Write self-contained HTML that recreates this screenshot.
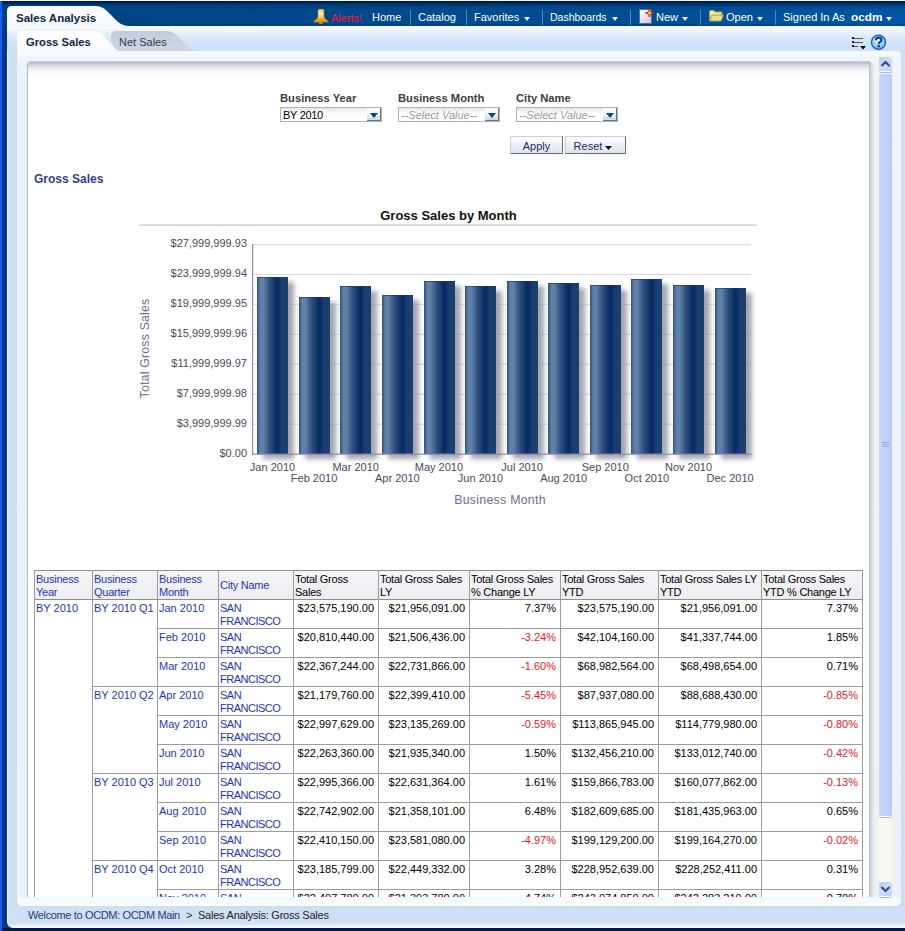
<!DOCTYPE html>
<html><head><meta charset="utf-8">
<style>
*{margin:0;padding:0;box-sizing:border-box}
html,body{width:905px;height:931px;overflow:hidden;background:#003a82;font-family:"Liberation Sans",sans-serif}
.a{position:absolute}
#frameL{left:0;top:0;width:2px;height:931px;background:#1b5cf0}
#topw{left:0;top:0;width:905px;height:1px;background:#f4f6fa}
#hdr{left:2px;top:1px;width:903px;height:25px;background:linear-gradient(#000a22 0px,#00204e 1px,#002858 2px,#00306a 3px,rgba(0,58,124,.85) 4px,rgba(0,58,118,.6) 5px,rgba(0,60,120,.3) 7px,rgba(0,60,120,0) 10px,rgba(0,60,120,0) 23px,rgba(0,50,130,.5) 24px),linear-gradient(90deg,#00427f,#00488a 35%,#004d92 65%,#0056a2)}
#outer{left:7px;top:26px;width:898px;height:902px;background:linear-gradient(90deg,#f6f9fe 0px,#f6f9fe 1px,#d6e5f6 1px,#cddef3 3px,#cddef3 100%);border-radius:0 0 0 6px}
#outerTop{left:7px;top:26px;width:898px;height:25px;border-radius:0 5px 0 0;background:linear-gradient(#ffffff 0px,#f2f7fd 3px,#e4eefa 8px,#d6e6f8 14px,#cfe2f6 20px,#cde0f5 25px)}
#bottomNavy{left:2px;top:928px;width:903px;height:3px;background:#001a40}
#inner{left:17px;top:51px;width:884px;height:855px;border-radius:4px 4px 5px 5px;background:linear-gradient(#f7fafd 0px,#f5f9fd 5px,#eef5fd 6px,#e9f2fc 100%);}
#innerL{left:17px;top:61px;width:10px;height:836px;background:linear-gradient(90deg,#f4f8fd 0px,#f4f8fd 1px,#e6f0fb 1px,#e9f2fc 10px)}
#innerBot{left:17px;top:897px;width:884px;height:9px;background:linear-gradient(#f4f8fd,#fafcfe);border-radius:0 0 5px 5px}
#page{left:27px;top:61px;width:842px;height:836px;background:#fff;border-left:1px solid #b4b8c4;border-radius:4px 6px 0 0;overflow:hidden}
#pageShadowTop{left:0;top:0;width:100%;height:15px;background:linear-gradient(#c8ccd8 0px,#bac0ce 1px,#c4c9d4 3px,#dcdee4 5px,#eeeff1 8px,#f8f8f8 11px,#fff 15px)}
#pageShadowR{left:855px;top:61px;width:20px;height:836px;border-radius:0 8px 0 0;background:linear-gradient(90deg,#b4b8c2 0px,#b4b8c2 14px,#d6d9e1 16px,#eef3fb 20px)}
#footer{left:9px;top:906px;width:896px;height:22px;border-radius:0 0 0 5px;background:linear-gradient(#c9ddf3 0px,#cde0f4 2px,#cde0f4 17px,#dde9f8 19px,#eef4fc 20px,#f8fbfe 22px)}
#footer span{position:absolute;top:2px;font-size:11px;line-height:14px;white-space:pre}
/* scrollbar */
#sbTrack{left:877px;top:56px;width:17px;height:841px;background:linear-gradient(90deg,#f0eee4,#faf9f4 2px,#f7f5ee 14px,#f0eee4);}
.sbBtn{width:13px;height:14px;border-radius:2px;background:linear-gradient(135deg,#b8cbf6,#cfddfb 50%,#b9cff7);box-shadow:0 1px 0 #fff,0 2px 0 #9fb6e6}
#sbUp{left:879px;top:57px}
#sbDown{left:879px;top:882px}
#sbThumb{left:879px;top:74px;width:13px;height:742px;border-radius:2px;background:linear-gradient(90deg,#c9d6f8,#c3d2f8 60%,#b4caf6);box-shadow:0 1px 0 #fff,0 2px 0 #9fb6e6}

.t{position:absolute;white-space:pre;line-height:13px}
.hn{font-size:11px;color:#fff;top:11px}
.sep{position:absolute;top:10px;width:1px;height:15px;background:#5f82b2}
.arr{position:absolute;top:17px;width:0;height:0;border-left:3.5px solid transparent;border-right:3.5px solid transparent;border-top:4px solid #eef2fa}
#tabSA{left:7px;top:6px;width:125px;height:21px}

#clip{left:0;top:0;width:869px;height:897px;overflow:hidden}
.plab{position:absolute;white-space:pre;font-size:11.2px;font-weight:bold;color:#3d3d3d;line-height:13px;top:92px}
.sel{position:absolute;top:107px;width:102px;height:15px;border:1px solid #b4b4ac;background:linear-gradient(#e2e6e8,#f8f9fa 4px,#fff 6px)}
.sel span{position:absolute;left:2px;top:1px;font-size:11px;line-height:13px;white-space:pre}
.sel .dd{position:absolute;right:0;top:0;width:14px;height:13px;background:linear-gradient(#fff,#eef3fa 50%,#c8d9ef);border-right:1px solid #6c7484;border-bottom:1px solid #6c7484}
.sel .dd:after{content:"";position:absolute;left:3px;top:5px;border-left:4px solid transparent;border-right:4px solid transparent;border-top:5px solid #0b4a6c}
.btn{position:absolute;height:18px;border:1px solid #c8ccd4;border-right-color:#6a6e78;border-bottom-color:#6a6e78;background:linear-gradient(#fbfcfe,#eef1f7 50%,#dde3ee);font-size:11px;line-height:18px;color:#1c2c5c;text-align:center;white-space:pre}
/*TABLECSS*/
.tl{height:1px;background:#9c9c9c}
.tv{width:1px;height:340px;background:#9c9c9c}
.th{font-size:11px;line-height:13px;color:#000;white-space:pre;letter-spacing:-0.25px}
.th.b,.td.b{color:#1f34bd}
.td{font-size:11px;line-height:13px;color:#000;white-space:pre}
.td.sf{letter-spacing:-0.5px}
.num{text-align:right}
.neg{color:#f0141e}
/*/TABLECSS*//*/TABLECSS*/</style></head>
<body>
<div class="a" id="frameL"></div>
<div class="a" id="topw"></div>
<div class="a" id="hdr"></div>
<div class="a" id="outer"></div>
<div class="a" id="outerTop"></div>
<div class="a" id="bottomNavy"></div>
<svg class="a" id="tabSA" viewBox="0 0 125 21"><defs><linearGradient id="gSA" x1="0" y1="0" x2="0" y2="1"><stop offset="0" stop-color="#ffffff"/><stop offset="1" stop-color="#f3f7fd"/></linearGradient></defs><path d="M0 21 V5 Q0 0 5 0 H88 Q95 0 100 5 L111 16 Q116 20 123 20 H125 V21 Z" fill="url(#gSA)"/></svg>
<span class="t" style="left:16px;top:12px;font-size:11.5px;font-weight:bold;color:#0d1f48">Sales Analysis</span>
<svg class="a" style="left:313px;top:9px" width="16" height="15" viewBox="0 0 16 15"><defs><radialGradient id="gB" cx="0.45" cy="0.35" r="0.6"><stop offset="0" stop-color="#fff8c8"/><stop offset="0.5" stop-color="#f0c850"/><stop offset="1" stop-color="#e49414"/></radialGradient></defs><path d="M5 1.5 Q5 0 6.5 0 H9.5 Q11 0 11 1.5 V7 Q11 10 15 12 V13 H1 V12 Q5 10 5 7 Z" fill="url(#gB)" stroke="#d88a10" stroke-width="0.6"/><ellipse cx="8" cy="14" rx="2" ry="1.2" fill="#c88a20"/></svg>
<span class="t hn" style="left:331px;top:11.5px;color:#ff1434">Alerts!</span>
<span class="t hn" style="left:372px">Home</span>
<div class="sep" style="left:410px"></div>
<span class="t hn" style="left:418px">Catalog</span>
<div class="sep" style="left:466px"></div>
<span class="t hn" style="left:474px">Favorites</span><div class="arr" style="left:524px"></div>
<div class="sep" style="left:542px"></div>
<span class="t hn" style="left:550px;font-size:10.5px">Dashboards</span><div class="arr" style="left:612px"></div>
<div class="sep" style="left:630px"></div>
<svg class="a" style="left:639px;top:8px" width="15" height="17" viewBox="0 0 15 17"><defs><linearGradient id="gN" x1="0" y1="0" x2="1" y2="1"><stop offset="0" stop-color="#ffffff"/><stop offset="1" stop-color="#c8c4e0"/></linearGradient></defs><rect x="0.5" y="1.5" width="12" height="14" fill="url(#gN)" stroke="#6a5a8a" stroke-width="0.8"/><path d="M10.5 1 L11.5 4 L14.5 5 L11.5 6 L10.5 9 L9.5 6 L6.5 5 L9.5 4 Z" fill="#ffe840" stroke="#b03010" stroke-width="1"/></svg>
<span class="t hn" style="left:656px">New</span><div class="arr" style="left:682px"></div>
<div class="sep" style="left:700px"></div>
<svg class="a" style="left:709px;top:10px" width="15" height="12" viewBox="0 0 15 12"><path d="M0.5 11 V1.5 Q0.5 0.5 1.5 0.5 H5 L6 2 H12 Q13 2 13 3 V4.5" fill="#eeeab0" stroke="#b89c30" stroke-width="1"/><path d="M0.5 11 L3 5 H14.5 L12 11 Z" fill="#e2de94" stroke="#b89c30" stroke-width="1"/></svg>
<span class="t hn" style="left:726px">Open</span><div class="arr" style="left:757px"></div>
<div class="sep" style="left:775px"></div>
<span class="t hn" style="left:783px">Signed In As</span>
<span class="t hn" style="left:851px;font-weight:bold;font-size:11.8px">ocdm</span><div class="arr" style="left:886px"></div>


<svg class="a" style="left:17px;top:30px" width="105" height="22" viewBox="0 0 105 22"><defs><linearGradient id="gGS" x1="0" y1="0" x2="0" y2="1"><stop offset="0" stop-color="#ffffff"/><stop offset="1" stop-color="#f6f9fd"/></linearGradient></defs><path d="M0 22 V5 Q0 1 5 1 H76 Q82 1 86 5 L97 17 Q101 21 104 21 V22 Z" fill="url(#gGS)"/></svg>
<svg class="a" style="left:111px;top:30px" width="88" height="22" viewBox="0 0 88 22"><defs><linearGradient id="gNS" x1="0" y1="0" x2="0" y2="1"><stop offset="0" stop-color="#c3ccda"/><stop offset="1" stop-color="#ccd7e6"/></linearGradient></defs><path d="M7 21 Q3 18 1 14 Q0 12 0 9 V6 Q0 1 5 1 H55 Q61 1 65 5 L77 17 Q81 21 86 21 Z" fill="url(#gNS)"/></svg>
<span class="t" style="left:26px;top:36px;font-size:11.2px;font-weight:bold;color:#0d1f48">Gross Sales</span>
<span class="t" style="left:119px;top:36px;font-size:11px;color:#343a4c">Net Sales</span>
<svg class="a" style="left:851px;top:36px" width="16" height="14" viewBox="0 0 16 14"><g fill="#1a1a6a"><rect x="1" y="1" width="2" height="2"/><rect x="1" y="5" width="2" height="2"/><rect x="1" y="9" width="2" height="2"/></g><g stroke="#555" stroke-width="1.2"><path d="M3 2.5H12M3 6.5H12M3 10.5H7"/></g><path d="M9 10 H15 L12 13.5 Z" fill="#000"/></svg>
<svg class="a" style="left:870px;top:34px" width="17" height="17" viewBox="0 0 17 17"><defs><radialGradient id="gH" cx="0.45" cy="0.3" r="0.7"><stop offset="0" stop-color="#eef8ff"/><stop offset="0.55" stop-color="#a6d2fa"/><stop offset="1" stop-color="#74b0ee"/></radialGradient></defs><circle cx="8.5" cy="8.3" r="7" fill="url(#gH)" stroke="#1c62c4" stroke-width="1.5"/><path d="M5.9 6.3 Q5.9 3.6 8.6 3.6 Q11.4 3.6 11.4 5.9 Q11.4 7.4 9.8 8.1 Q8.8 8.6 8.8 9.9" fill="none" stroke="#0b3c9e" stroke-width="2.1"/><rect x="7.6" y="11" width="2.3" height="2.3" fill="#0b3c9e"/></svg>
<div class="a" id="inner"></div>
<div class="a" id="innerL"></div><div class="a" id="innerBot"></div>
<div class="a" id="pageShadowR"></div>
<div class="a" id="page"><div class="a" id="pageShadowTop"></div>
<!--PAGE-->
</div>

<div class="a" id="clip">
<span class="plab" style="left:280px">Business Year</span>
<span class="plab" style="left:398px">Business Month</span>
<span class="plab" style="left:516px">City Name</span>
<div class="sel" style="left:280px"><span style="color:#000;letter-spacing:-0.3px">BY 2010</span><div class="dd"></div></div>
<div class="sel" style="left:398px"><span style="color:#9a9aa4;font-style:italic">--Select Value--</span><div class="dd"></div></div>
<div class="sel" style="left:516px"><span style="color:#9a9aa4;font-style:italic">--Select Value--</span><div class="dd"></div></div>
<div class="btn" style="left:510px;top:136px;width:53px">Apply</div>
<div class="btn" style="left:565px;top:136px;width:61px;padding-right:5px">Reset <svg width="7" height="4" style="vertical-align:0px"><path d="M0 0H7L3.5 4Z" fill="#111"/></svg></div>
<span class="t" style="left:34px;top:173px;font-size:12px;font-weight:bold;color:#333a96">Gross Sales</span>
<!--CHART--><svg class="a" style="left:0;top:0" width="869" height="520" viewBox="0 0 869 520"><defs><linearGradient id="gBar" x1="0" y1="0" x2="1" y2="0"><stop offset="0" stop-color="#2f507e"/><stop offset="0.1" stop-color="#5f7fa5"/><stop offset="0.2" stop-color="#6282a6"/><stop offset="0.42" stop-color="#2c4d7d"/><stop offset="0.66" stop-color="#052961"/><stop offset="0.8" stop-color="#193d70"/><stop offset="1" stop-color="#1c406e"/></linearGradient><filter id="blur" x="-50%" y="-50%" width="200%" height="200%"><feGaussianBlur stdDeviation="2.6"/></filter></defs><text x="448.5" y="219.6" text-anchor="middle" font-family="Liberation Sans" font-weight="bold" font-size="13" fill="#111">Gross Sales by Month</text><rect x="139" y="224.3" width="618" height="1.6" fill="#d2d2e2"/><rect x="253" y="423.57" width="498" height="1.2" fill="#d9d9e6"/><rect x="253" y="393.64" width="498" height="1.2" fill="#d9d9e6"/><rect x="253" y="363.71" width="498" height="1.2" fill="#d9d9e6"/><rect x="253" y="333.78" width="498" height="1.2" fill="#d9d9e6"/><rect x="253" y="303.85" width="498" height="1.2" fill="#d9d9e6"/><rect x="253" y="273.92" width="498" height="1.2" fill="#d9d9e6"/><rect x="253" y="243.99" width="498" height="1.2" fill="#d9d9e6"/><g filter="url(#blur)" fill="#8e909a" opacity="0.8"><rect x="263.0" y="282.0" width="31" height="177.0"/><rect x="305.0" y="302.0" width="31" height="157.0"/><rect x="346.0" y="291.0" width="31" height="168.0"/><rect x="388.0" y="300.0" width="31" height="159.0"/><rect x="430.0" y="286.0" width="31" height="173.0"/><rect x="471.0" y="291.0" width="31" height="168.0"/><rect x="513.0" y="286.0" width="31" height="173.0"/><rect x="554.0" y="288.0" width="31" height="171.0"/><rect x="596.0" y="290.0" width="31" height="169.0"/><rect x="637.0" y="284.0" width="31" height="175.0"/><rect x="679.0" y="290.0" width="31" height="169.0"/><rect x="721.0" y="293.0" width="31" height="166.0"/></g><rect x="257.0" y="277.0" width="31" height="177.0" fill="url(#gBar)"/><rect x="257.0" y="277.0" width="31" height="1" fill="#163866" opacity="0.6"/><rect x="299.0" y="297.0" width="31" height="157.0" fill="url(#gBar)"/><rect x="299.0" y="297.0" width="31" height="1" fill="#163866" opacity="0.6"/><rect x="340.0" y="286.0" width="31" height="168.0" fill="url(#gBar)"/><rect x="340.0" y="286.0" width="31" height="1" fill="#163866" opacity="0.6"/><rect x="382.0" y="295.0" width="31" height="159.0" fill="url(#gBar)"/><rect x="382.0" y="295.0" width="31" height="1" fill="#163866" opacity="0.6"/><rect x="424.0" y="281.0" width="31" height="173.0" fill="url(#gBar)"/><rect x="424.0" y="281.0" width="31" height="1" fill="#163866" opacity="0.6"/><rect x="465.0" y="286.0" width="31" height="168.0" fill="url(#gBar)"/><rect x="465.0" y="286.0" width="31" height="1" fill="#163866" opacity="0.6"/><rect x="507.0" y="281.0" width="31" height="173.0" fill="url(#gBar)"/><rect x="507.0" y="281.0" width="31" height="1" fill="#163866" opacity="0.6"/><rect x="548.0" y="283.0" width="31" height="171.0" fill="url(#gBar)"/><rect x="548.0" y="283.0" width="31" height="1" fill="#163866" opacity="0.6"/><rect x="590.0" y="285.0" width="31" height="169.0" fill="url(#gBar)"/><rect x="590.0" y="285.0" width="31" height="1" fill="#163866" opacity="0.6"/><rect x="631.0" y="279.0" width="31" height="175.0" fill="url(#gBar)"/><rect x="631.0" y="279.0" width="31" height="1" fill="#163866" opacity="0.6"/><rect x="673.0" y="285.0" width="31" height="169.0" fill="url(#gBar)"/><rect x="673.0" y="285.0" width="31" height="1" fill="#163866" opacity="0.6"/><rect x="715.0" y="288.0" width="31" height="166.0" fill="url(#gBar)"/><rect x="715.0" y="288.0" width="31" height="1" fill="#163866" opacity="0.6"/><rect x="252" y="244" width="1.2" height="211" fill="#8c8cb2"/><rect x="252" y="453.6" width="500" height="1.2" fill="#8c8cb2"/><text x="247" y="456.8" text-anchor="end" font-family="Liberation Sans" font-size="11" fill="#4a4a5c">$0.00</text><text x="247" y="426.9" text-anchor="end" font-family="Liberation Sans" font-size="11" fill="#4a4a5c">$3,999,999.99</text><text x="247" y="396.9" text-anchor="end" font-family="Liberation Sans" font-size="11" fill="#4a4a5c">$7,999,999.98</text><text x="247" y="367.0" text-anchor="end" font-family="Liberation Sans" font-size="11" fill="#4a4a5c">$11,999,999.97</text><text x="247" y="337.1" text-anchor="end" font-family="Liberation Sans" font-size="11" fill="#4a4a5c">$15,999,999.96</text><text x="247" y="307.2" text-anchor="end" font-family="Liberation Sans" font-size="11" fill="#4a4a5c">$19,999,999.95</text><text x="247" y="277.2" text-anchor="end" font-family="Liberation Sans" font-size="11" fill="#4a4a5c">$23,999,999.94</text><text x="247" y="247.3" text-anchor="end" font-family="Liberation Sans" font-size="11" fill="#4a4a5c">$27,999,999.93</text><text x="272.5" y="470.8" text-anchor="middle" font-family="Liberation Sans" font-size="11" fill="#4a4a5c">Jan 2010</text><text x="314.1" y="481.9" text-anchor="middle" font-family="Liberation Sans" font-size="11" fill="#4a4a5c">Feb 2010</text><text x="355.7" y="470.8" text-anchor="middle" font-family="Liberation Sans" font-size="11" fill="#4a4a5c">Mar 2010</text><text x="397.3" y="481.9" text-anchor="middle" font-family="Liberation Sans" font-size="11" fill="#4a4a5c">Apr 2010</text><text x="438.9" y="470.8" text-anchor="middle" font-family="Liberation Sans" font-size="11" fill="#4a4a5c">May 2010</text><text x="480.5" y="481.9" text-anchor="middle" font-family="Liberation Sans" font-size="11" fill="#4a4a5c">Jun 2010</text><text x="522.1" y="470.8" text-anchor="middle" font-family="Liberation Sans" font-size="11" fill="#4a4a5c">Jul 2010</text><text x="563.7" y="481.9" text-anchor="middle" font-family="Liberation Sans" font-size="11" fill="#4a4a5c">Aug 2010</text><text x="605.3" y="470.8" text-anchor="middle" font-family="Liberation Sans" font-size="11" fill="#4a4a5c">Sep 2010</text><text x="646.9" y="481.9" text-anchor="middle" font-family="Liberation Sans" font-size="11" fill="#4a4a5c">Oct 2010</text><text x="688.5" y="470.8" text-anchor="middle" font-family="Liberation Sans" font-size="11" fill="#4a4a5c">Nov 2010</text><text x="730.1" y="481.9" text-anchor="middle" font-family="Liberation Sans" font-size="11" fill="#4a4a5c">Dec 2010</text><text x="500" y="504.2" text-anchor="middle" font-family="Liberation Sans" font-size="12.3" letter-spacing="0.3" fill="#6c6c9c">Business Month</text><text transform="translate(149,348.5) rotate(-90)" x="0" y="0" text-anchor="middle" font-family="Liberation Sans" font-size="12.3" letter-spacing="0.2" fill="#6c6c9c">Total Gross Sales</text></svg><!--/CHART-->
<!--TABLE--><div class="a" style="left:34px;top:570px;width:829px;height:29px;background:linear-gradient(#f6f6f9,#ececf1)"></div><div class="a tl" style="left:34px;top:570px;width:829px;background:#8e8e8e"></div><div class="a tl" style="left:34px;top:599px;width:829px;background:#8e8e8e"></div><div class="a tl" style="left:157px;top:628px;width:706px"></div><div class="a tl" style="left:157px;top:657px;width:706px"></div><div class="a tl" style="left:92px;top:686px;width:771px"></div><div class="a tl" style="left:157px;top:715px;width:706px"></div><div class="a tl" style="left:157px;top:744px;width:706px"></div><div class="a tl" style="left:92px;top:773px;width:771px"></div><div class="a tl" style="left:157px;top:802px;width:706px"></div><div class="a tl" style="left:157px;top:831px;width:706px"></div><div class="a tl" style="left:92px;top:860px;width:771px"></div><div class="a tl" style="left:157px;top:889px;width:706px"></div><div class="a tl" style="left:157px;top:918px;width:706px"></div><div class="a tv" style="left:34px;top:570px"></div><div class="a tv" style="left:92px;top:570px"></div><div class="a tv" style="left:157px;top:570px"></div><div class="a tv" style="left:218px;top:570px"></div><div class="a tv" style="left:293px;top:570px"></div><div class="a tv" style="left:378px;top:570px"></div><div class="a tv" style="left:469px;top:570px"></div><div class="a tv" style="left:560px;top:570px"></div><div class="a tv" style="left:658px;top:570px"></div><div class="a tv" style="left:761px;top:570px"></div><div class="a tv" style="left:862px;top:570px"></div><div class="a th b" style="left:36px;top:573px">Business<br>Year</div><div class="a th b" style="left:94px;top:573px">Business<br>Quarter</div><div class="a th b" style="left:159px;top:573px">Business<br>Month</div><div class="a th b" style="left:220px;top:579px">City Name</div><div class="a th" style="left:295px;top:573px">Total Gross<br>Sales</div><div class="a th" style="left:380px;top:573px">Total Gross Sales<br>LY</div><div class="a th" style="left:471px;top:573px">Total Gross Sales<br>% Change LY</div><div class="a th" style="left:562px;top:573px">Total Gross Sales<br>YTD</div><div class="a th" style="left:660px;top:573px">Total Gross Sales LY<br>YTD</div><div class="a th" style="left:763px;top:573px">Total Gross Sales<br>YTD % Change LY</div><div class="a td b" style="left:36px;top:602px">BY 2010</div><div class="a td b" style="left:94px;top:602px">BY 2010 Q1</div><div class="a td b" style="left:94px;top:689px">BY 2010 Q2</div><div class="a td b" style="left:94px;top:776px">BY 2010 Q3</div><div class="a td b" style="left:94px;top:863px">BY 2010 Q4</div><div class="a td b" style="left:159px;top:602px">Jan 2010</div><div class="a td b sf" style="left:220px;top:602px">SAN<br>FRANCISCO</div><div class="a td num" style="left:293px;top:602px;width:81px">$23,575,190.00</div><div class="a td num" style="left:378px;top:602px;width:87px">$21,956,091.00</div><div class="a td num" style="left:469px;top:602px;width:87px">7.37%</div><div class="a td num" style="left:560px;top:602px;width:94px">$23,575,190.00</div><div class="a td num" style="left:658px;top:602px;width:99px">$21,956,091.00</div><div class="a td num" style="left:761px;top:602px;width:97px">7.37%</div><div class="a td b" style="left:159px;top:631px">Feb 2010</div><div class="a td b sf" style="left:220px;top:631px">SAN<br>FRANCISCO</div><div class="a td num" style="left:293px;top:631px;width:81px">$20,810,440.00</div><div class="a td num" style="left:378px;top:631px;width:87px">$21,506,436.00</div><div class="a td num neg" style="left:469px;top:631px;width:87px">-3.24%</div><div class="a td num" style="left:560px;top:631px;width:94px">$42,104,160.00</div><div class="a td num" style="left:658px;top:631px;width:99px">$41,337,744.00</div><div class="a td num" style="left:761px;top:631px;width:97px">1.85%</div><div class="a td b" style="left:159px;top:660px">Mar 2010</div><div class="a td b sf" style="left:220px;top:660px">SAN<br>FRANCISCO</div><div class="a td num" style="left:293px;top:660px;width:81px">$22,367,244.00</div><div class="a td num" style="left:378px;top:660px;width:87px">$22,731,866.00</div><div class="a td num neg" style="left:469px;top:660px;width:87px">-1.60%</div><div class="a td num" style="left:560px;top:660px;width:94px">$68,982,564.00</div><div class="a td num" style="left:658px;top:660px;width:99px">$68,498,654.00</div><div class="a td num" style="left:761px;top:660px;width:97px">0.71%</div><div class="a td b" style="left:159px;top:689px">Apr 2010</div><div class="a td b sf" style="left:220px;top:689px">SAN<br>FRANCISCO</div><div class="a td num" style="left:293px;top:689px;width:81px">$21,179,760.00</div><div class="a td num" style="left:378px;top:689px;width:87px">$22,399,410.00</div><div class="a td num neg" style="left:469px;top:689px;width:87px">-5.45%</div><div class="a td num" style="left:560px;top:689px;width:94px">$87,937,080.00</div><div class="a td num" style="left:658px;top:689px;width:99px">$88,688,430.00</div><div class="a td num neg" style="left:761px;top:689px;width:97px">-0.85%</div><div class="a td b" style="left:159px;top:718px">May 2010</div><div class="a td b sf" style="left:220px;top:718px">SAN<br>FRANCISCO</div><div class="a td num" style="left:293px;top:718px;width:81px">$22,997,629.00</div><div class="a td num" style="left:378px;top:718px;width:87px">$23,135,269.00</div><div class="a td num neg" style="left:469px;top:718px;width:87px">-0.59%</div><div class="a td num" style="left:560px;top:718px;width:94px">$113,865,945.00</div><div class="a td num" style="left:658px;top:718px;width:99px">$114,779,980.00</div><div class="a td num neg" style="left:761px;top:718px;width:97px">-0.80%</div><div class="a td b" style="left:159px;top:747px">Jun 2010</div><div class="a td b sf" style="left:220px;top:747px">SAN<br>FRANCISCO</div><div class="a td num" style="left:293px;top:747px;width:81px">$22,263,360.00</div><div class="a td num" style="left:378px;top:747px;width:87px">$21,935,340.00</div><div class="a td num" style="left:469px;top:747px;width:87px">1.50%</div><div class="a td num" style="left:560px;top:747px;width:94px">$132,456,210.00</div><div class="a td num" style="left:658px;top:747px;width:99px">$133,012,740.00</div><div class="a td num neg" style="left:761px;top:747px;width:97px">-0.42%</div><div class="a td b" style="left:159px;top:776px">Jul 2010</div><div class="a td b sf" style="left:220px;top:776px">SAN<br>FRANCISCO</div><div class="a td num" style="left:293px;top:776px;width:81px">$22,995,366.00</div><div class="a td num" style="left:378px;top:776px;width:87px">$22,631,364.00</div><div class="a td num" style="left:469px;top:776px;width:87px">1.61%</div><div class="a td num" style="left:560px;top:776px;width:94px">$159,866,783.00</div><div class="a td num" style="left:658px;top:776px;width:99px">$160,077,862.00</div><div class="a td num neg" style="left:761px;top:776px;width:97px">-0.13%</div><div class="a td b" style="left:159px;top:805px">Aug 2010</div><div class="a td b sf" style="left:220px;top:805px">SAN<br>FRANCISCO</div><div class="a td num" style="left:293px;top:805px;width:81px">$22,742,902.00</div><div class="a td num" style="left:378px;top:805px;width:87px">$21,358,101.00</div><div class="a td num" style="left:469px;top:805px;width:87px">6.48%</div><div class="a td num" style="left:560px;top:805px;width:94px">$182,609,685.00</div><div class="a td num" style="left:658px;top:805px;width:99px">$181,435,963.00</div><div class="a td num" style="left:761px;top:805px;width:97px">0.65%</div><div class="a td b" style="left:159px;top:834px">Sep 2010</div><div class="a td b sf" style="left:220px;top:834px">SAN<br>FRANCISCO</div><div class="a td num" style="left:293px;top:834px;width:81px">$22,410,150.00</div><div class="a td num" style="left:378px;top:834px;width:87px">$23,581,080.00</div><div class="a td num neg" style="left:469px;top:834px;width:87px">-4.97%</div><div class="a td num" style="left:560px;top:834px;width:94px">$199,129,200.00</div><div class="a td num" style="left:658px;top:834px;width:99px">$199,164,270.00</div><div class="a td num neg" style="left:761px;top:834px;width:97px">-0.02%</div><div class="a td b" style="left:159px;top:863px">Oct 2010</div><div class="a td b sf" style="left:220px;top:863px">SAN<br>FRANCISCO</div><div class="a td num" style="left:293px;top:863px;width:81px">$23,185,799.00</div><div class="a td num" style="left:378px;top:863px;width:87px">$22,449,332.00</div><div class="a td num" style="left:469px;top:863px;width:87px">3.28%</div><div class="a td num" style="left:560px;top:863px;width:94px">$228,952,639.00</div><div class="a td num" style="left:658px;top:863px;width:99px">$228,252,411.00</div><div class="a td num" style="left:761px;top:863px;width:97px">0.31%</div><div class="a td b" style="left:159px;top:892px">Nov 2010</div><div class="a td b sf" style="left:220px;top:892px">SAN<br>FRANCISCO</div><div class="a td num" style="left:293px;top:892px;width:81px">$22,407,780.00</div><div class="a td num" style="left:378px;top:892px;width:87px">$21,393,780.00</div><div class="a td num" style="left:469px;top:892px;width:87px">4.74%</div><div class="a td num" style="left:560px;top:892px;width:94px">$243,074,850.00</div><div class="a td num" style="left:658px;top:892px;width:99px">$242,283,210.00</div><div class="a td num" style="left:761px;top:892px;width:97px">0.70%</div><!--/TABLE-->
</div>
<div class="a" id="sbTrack"></div>
<div class="a sbBtn" id="sbUp"><svg width="13" height="14" viewBox="0 0 13 14"><path d="M2.5 9 L6.5 5 L10.5 9" fill="none" stroke="#3d4c6c" stroke-width="2.2"/></svg></div>
<div class="a" id="sbThumb"><svg class="a" style="left:3px;top:367px" width="7" height="8"><path d="M0 1.5H7M0 3.5H7M0 5.5H7" stroke="#8ea8e8" stroke-width="1"/></svg></div>
<div class="a sbBtn" id="sbDown"><svg width="13" height="14" viewBox="0 0 13 14"><path d="M2.5 5 L6.5 9 L10.5 5" fill="none" stroke="#3d4c6c" stroke-width="2.2"/></svg></div>
<div class="a" id="footer"><span style="left:19px;color:#2c3c7c;letter-spacing:-0.36px">Welcome to OCDM: OCDM Main</span><span style="left:177px;color:#333">&gt;</span><span style="left:189px;color:#222;letter-spacing:-0.23px">Sales Analysis: Gross Sales</span></div>
</body></html>
